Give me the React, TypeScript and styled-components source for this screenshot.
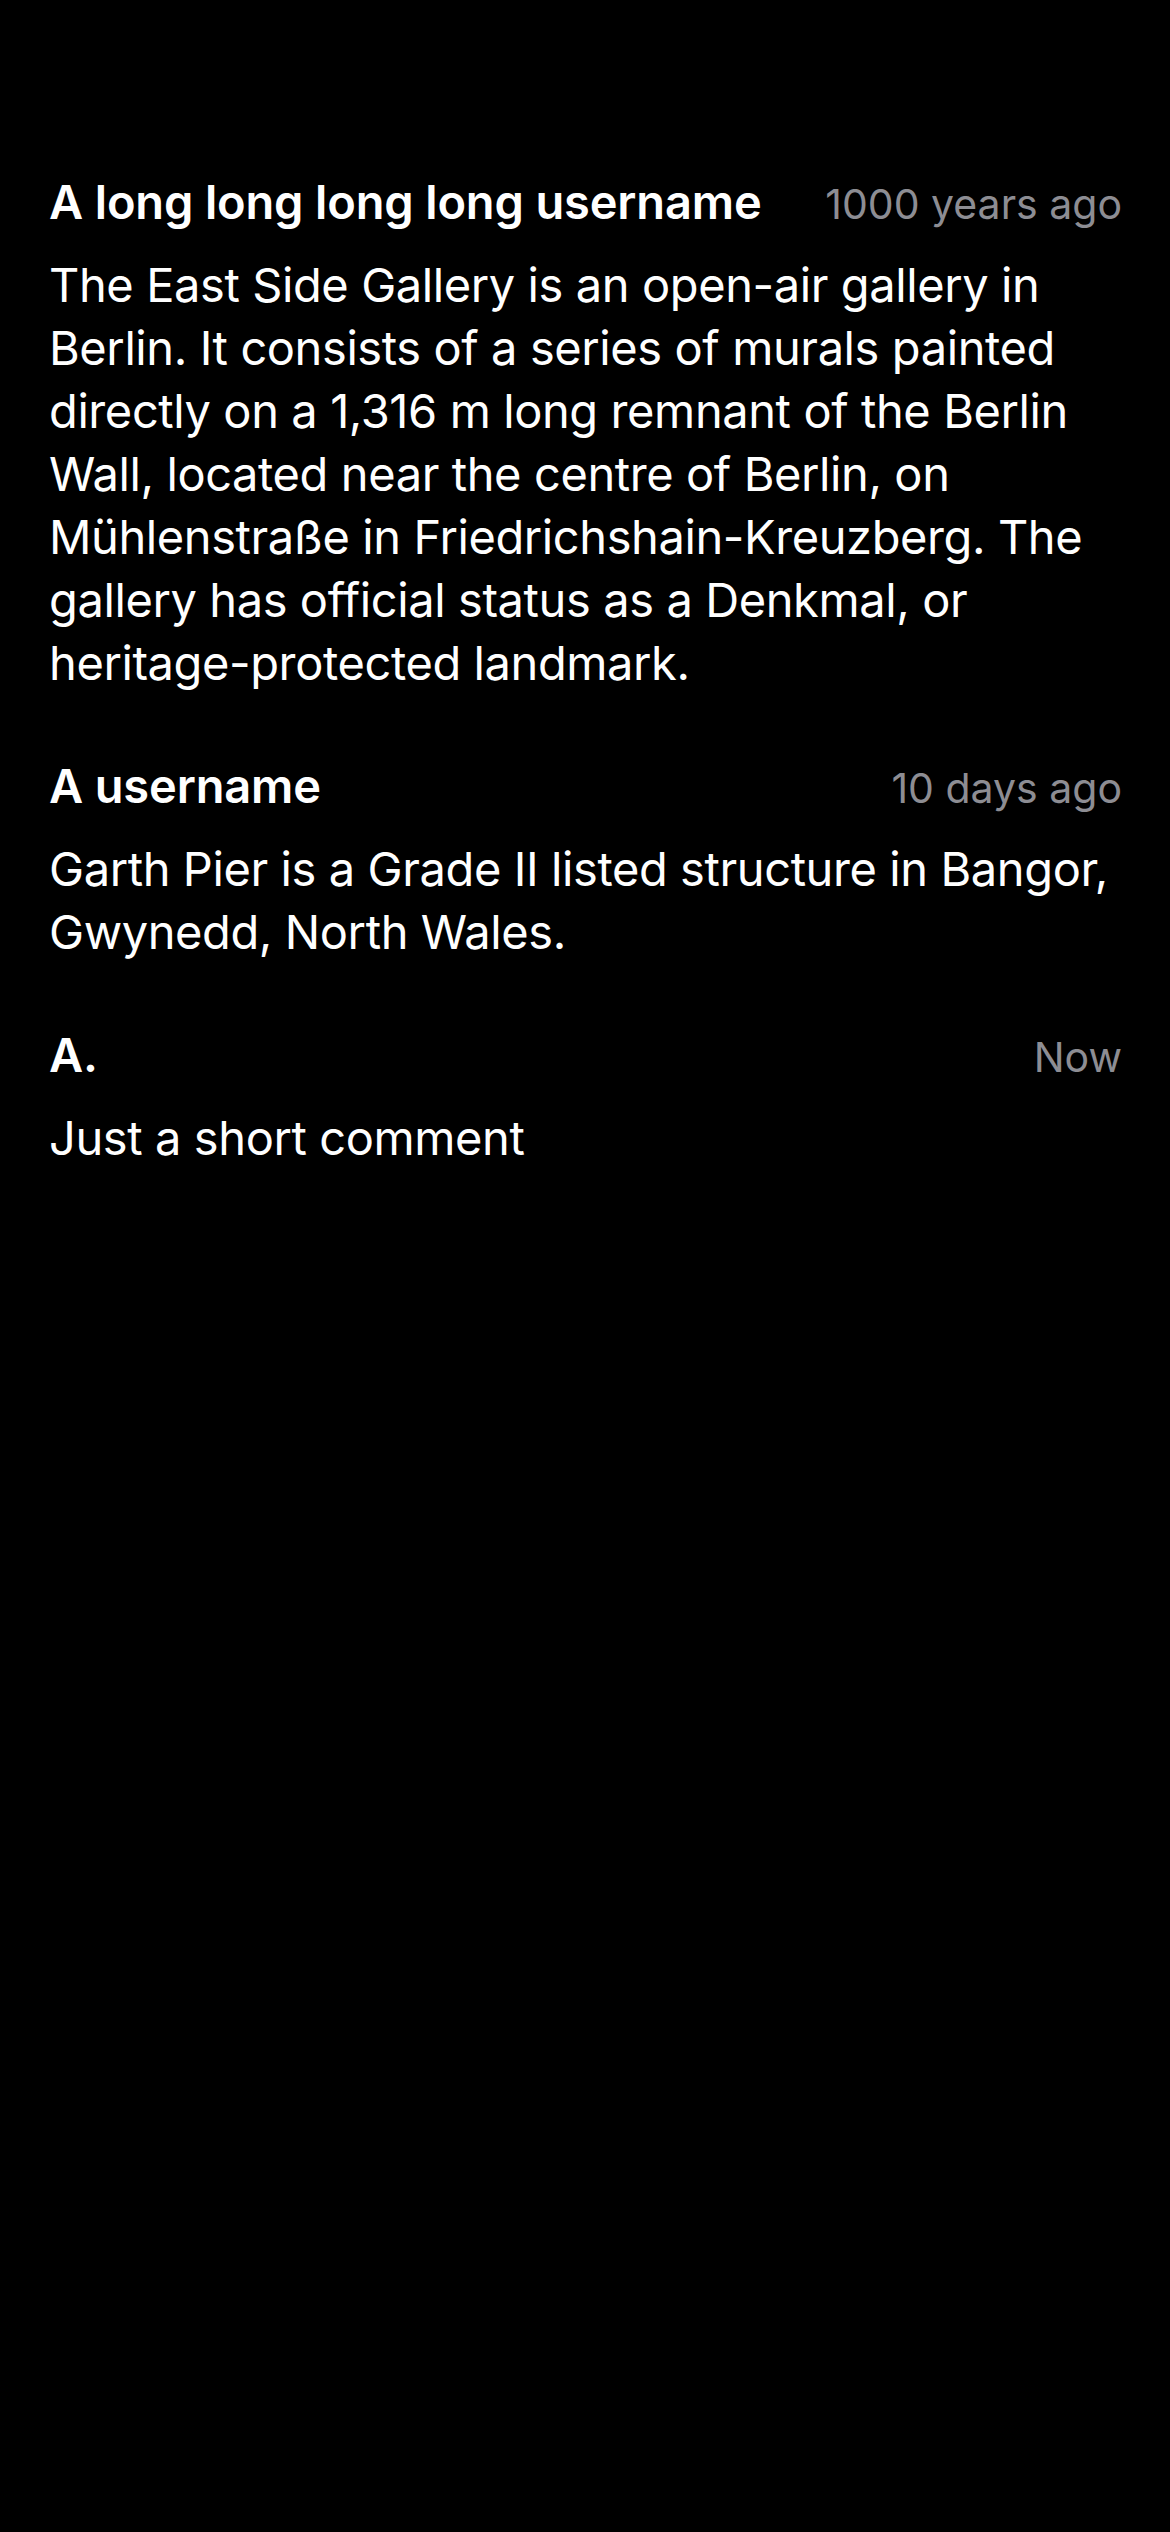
import styled, { createGlobalStyle } from "styled-components";

const GlobalStyle = createGlobalStyle`
  html, body {
    margin: 0;
    padding: 0;
    background: #000;
  }

  body {
    font-family: Inter, "Noto Sans", "Liberation Sans", sans-serif;
    -webkit-font-smoothing: antialiased;
  }
`;

const Screen = styled.main`
  width: 1170px;
  min-height: 2532px;
  background: #000;
  color: #fff;
  box-sizing: border-box;
  padding: 175px 48px 0 49px;
`;

const CommentList = styled.ul`
  list-style: none;
  margin: 0;
  padding: 0;
  display: flex;
  flex-direction: column;
  gap: 65px;
`;

const CommentItem = styled.li`
  display: flex;
  flex-direction: column;
  gap: 24px;
`;

const Header = styled.div`
  display: flex;
  justify-content: space-between;
  align-items: baseline;
  gap: 40px;
  height: 54px;
  line-height: 54px;
`;

const Username = styled.span`
  font-size: 47px;
  font-weight: 600;
  letter-spacing: -0.15px;
  white-space: nowrap;
`;

const Timestamp = styled.span`
  font-size: 41px;
  color: #8d8d93;
  white-space: nowrap;
`;

const Body = styled.p`
  margin: 0;
  font-size: 47px;
  line-height: 63px;
  letter-spacing: -0.4px;
`;

type Comment = {
  user: string;
  when: string;
  text: string;
};

const comments: Comment[] = [
  {
    user: "A long long long long username",
    when: "1000 years ago",
    text:
      "The East Side Gallery is an open-air gallery in Berlin. It consists of a series of murals painted directly on a 1,316 m long remnant of the Berlin Wall, located near the centre of Berlin, on Mühlenstraße in Friedrichshain-Kreuzberg. The gallery has official status as a Denkmal, or heritage-protected landmark.",
  },
  {
    user: "A username",
    when: "10 days ago",
    text: "Garth Pier is a Grade II listed structure in Bangor, Gwynedd, North Wales.",
  },
  {
    user: "A.",
    when: "Now",
    text: "Just a short comment",
  },
];

const App = () => {
  return (
    <>
      <GlobalStyle />
      <Screen>
        <CommentList>
          {comments.map((c) => (
            <CommentItem key={c.user}>
              <Header>
                <Username>{c.user}</Username>
                <Timestamp>{c.when}</Timestamp>
              </Header>
              <Body>{c.text}</Body>
            </CommentItem>
          ))}
        </CommentList>
      </Screen>
    </>
  );
};

export default App;
